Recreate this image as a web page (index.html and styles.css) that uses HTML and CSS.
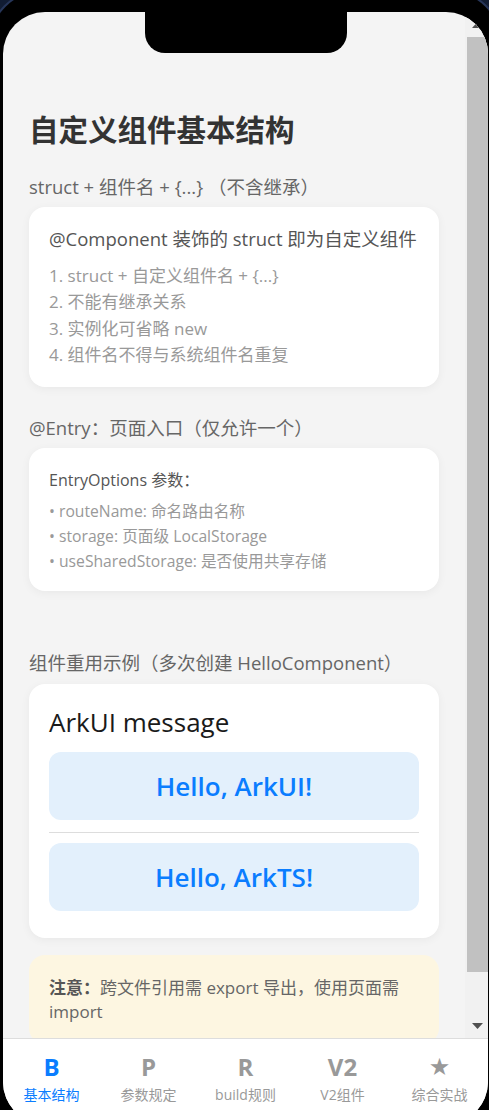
FILE: index.html
```html
<!DOCTYPE html>
<html lang="zh-CN">
<head>
<meta charset="utf-8">
<title>自定义组件基本结构</title>
<link rel="stylesheet" href="styles.css">
</head>
<body>
<div class="phone">
  <div class="screen">
    <div class="notch"></div>
    <div class="viewport">
      <main class="scroll">
        <div class="content">
          <h1 class="title">自定义组件基本结构</h1>
          <h2 class="sec sec-first">struct + 组件名 + {...} （不含继承）</h2>
          <section class="card card-rules">
            <p class="lead">@Component 装饰的 struct 即为自定义组件</p>
            <ul class="rules">
              <li>1. struct + 自定义组件名 + {...}</li>
              <li>2. 不能有继承关系</li>
              <li>3. 实例化可省略 new</li>
              <li>4. 组件名不得与系统组件名重复</li>
            </ul>
          </section>

          <h2 class="sec sec-second">@Entry：页面入口（仅允许一个）</h2>
          <section class="card card-entry">
            <p class="entry-lead">EntryOptions 参数：</p>
            <ul class="bullets">
              <li>• routeName: 命名路由名称</li>
              <li>• storage: 页面级 LocalStorage</li>
              <li>• useSharedStorage: 是否使用共享存储</li>
            </ul>
          </section>

          <h2 class="sec sec-third">组件重用示例（多次创建 HelloComponent）</h2>
          <section class="card card-demo">
            <p class="demo-title">ArkUI message</p>
            <div class="hello">Hello, ArkUI!</div>
            <hr class="divider">
            <div class="hello">Hello, ArkTS!</div>
          </section>

          <section class="note">
            <p class="note-line"><strong>注意：</strong><span>跨文件引用需 export 导出，使用页面需</span></p>
            <p class="note-line">import</p>
          </section>
        </div>
      </main>
      <div class="scrollbar" aria-hidden="true">
        <div class="sb-btn">
          <svg width="11" height="6" viewBox="0 0 11 6"><path d="M0 6h11L5.5 0z" fill="#505050"/></svg>
        </div>
        <div class="sb-thumb"></div>
        <div class="sb-track"></div>
        <div class="sb-btn">
          <svg width="11" height="6" viewBox="0 0 11 6"><path d="M0 0h11L5.5 6z" fill="#505050"/></svg>
        </div>
      </div>
    </div>
    <nav class="tabbar">
      <div class="tab active"><span class="tab-icon">B</span><span class="tab-label">基本结构</span></div>
      <div class="tab"><span class="tab-icon">P</span><span class="tab-label">参数规定</span></div>
      <div class="tab"><span class="tab-icon">R</span><span class="tab-label">build规则</span></div>
      <div class="tab"><span class="tab-icon">V2</span><span class="tab-label">V2组件</span></div>
      <div class="tab"><span class="tab-icon star">★</span><span class="tab-label">综合实战</span></div>
    </nav>
  </div>
</div>
</body>
</html>
```

FILE: styles.css
```css
* { box-sizing: border-box; }

html, body {
  margin: 0;
  height: 1110px;
  overflow: hidden;
}

body {
  background: #111c33;
  font-family: "Open Sans", "Noto Sans CJK SC", sans-serif;
}

.phone {
  width: 509px;
  height: 1160px;
  margin: -8px 0 0 -9px;
  padding: 20px 12px 0;
  background: #000;
  border-radius: 50px;
  box-shadow: 0 0 0 2px #27365a;
}

.screen {
  position: relative;
  height: 1112px;
  border-radius: 42px;
  overflow: hidden;
  background: #f4f4f4;
  display: flex;
  flex-direction: column;
}

.notch {
  position: absolute;
  top: 0;
  left: 142px;
  width: 202px;
  height: 41px;
  background: #000;
  border-radius: 0 0 20px 20px;
  z-index: 2;
}

.viewport {
  flex: none;
  height: 1026px;
  display: flex;
}

.scroll {
  flex: 1;
  min-width: 0;
  overflow: hidden;
}

.scrollbar {
  flex: none;
  width: 23px;
  display: flex;
  flex-direction: column;
  background: #f1f1f1;
}

.sb-btn {
  flex: none;
  height: 25px;
  display: flex;
  align-items: center;
  justify-content: center;
  padding-left: 1px;
}
.sb-btn svg { display: block; }

.sb-thumb {
  flex: none;
  height: 935px;
  margin-left: 2px;
  background: #c1c1c1;
}

.sb-track { flex: 1; }

.content {
  padding: 98px 26px 39px;
}

.title {
  margin: 0;
  font-size: 29.5px;
  line-height: 40px;
  font-weight: 700;
  color: #333;
}

.sec {
  margin: 0 0 8px;
  font-size: 18.5px;
  line-height: 24px;
  font-weight: 400;
  color: #666;
}
.sec-first { margin-top: 25px; }
.sec-second { margin-top: 29px; }
.sec-third { margin-top: 60px; margin-bottom: 9px; }

.card {
  background: #fff;
  border-radius: 16px;
  box-shadow: 0 2px 10px rgba(0, 0, 0, 0.05);
}

.card-rules { padding: 19px 20px; }

.lead {
  margin: 0;
  font-size: 18.5px;
  line-height: 26px;
  color: #555;
  white-space: nowrap;
}

.rules {
  list-style: none;
  margin: 11px 0 0;
  padding: 0;
  font-size: 17px;
  line-height: 26.3px;
  color: #999;
}

.card-entry { padding: 20px 20px 17px; }

.entry-lead {
  margin: 0;
  font-size: 16px;
  line-height: 24px;
  color: #555;
}

.bullets {
  list-style: none;
  margin: 7px 0 0;
  padding: 0;
  font-size: 15.7px;
  line-height: 25px;
  color: #999;
}

.card-demo { padding: 22px 20px 27px; }

.demo-title {
  margin: 0 0 14px;
  font-size: 26px;
  line-height: 32px;
  color: #1a1a1a;
}

.hello {
  height: 68px;
  display: flex;
  align-items: center;
  justify-content: center;
  background: #e3f0fc;
  border-radius: 12px;
  color: #0a7dff;
  font-size: 26px;
  font-weight: 600;
}

.divider {
  height: 0;
  border: 0;
  border-top: 1px solid #ddd;
  margin: 12px 0 10px;
}

.note {
  margin-top: 17px;
  background: #fdf6e1;
  border-radius: 16px;
  padding: 21px 20px;
}
.note-line {
  margin: 0;
  font-size: 17px;
  line-height: 23.5px;
  color: #666;
  white-space: nowrap;
}
.note strong {
  color: #555;
  font-weight: 700;
}

.tabbar {
  flex: 1;
  display: grid;
  grid-template-columns: repeat(5, 1fr);
  background: #fff;
  border-top: 1px solid #ddd;
}

.tab {
  display: flex;
  flex-direction: column;
  align-items: center;
  padding-top: 14px;
}

.tab-icon {
  font-size: 24px;
  line-height: 28px;
  font-weight: 700;
  color: #999;
}
.tab-icon.star { font-weight: 400; font-family: "DejaVu Sans", sans-serif; }

.tab-label {
  margin-top: 5px;
  font-size: 14px;
  line-height: 18px;
  color: #999;
}

.tab.active .tab-icon,
.tab.active .tab-label { color: #0a7dff; }
```
